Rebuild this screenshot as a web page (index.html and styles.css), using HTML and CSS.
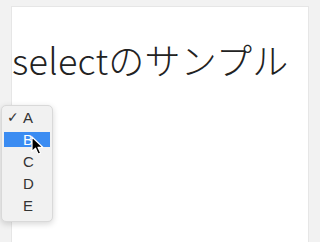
FILE: index.html
```html
<!DOCTYPE html>
<html lang="ja">
<head>
<meta charset="utf-8">
<link rel="stylesheet" href="styles.css">
</head>
<body>
<div class="page">
  <h1 class="title">selectのサンプル</h1>
</div>
<div class="menu">
  <div class="item"><span class="check">✓</span><span class="label">A</span></div>
  <div class="item active"><span class="label">B</span></div>
  <div class="item"><span class="label">C</span></div>
  <div class="item"><span class="label">D</span></div>
  <div class="item"><span class="label">E</span></div>
</div>
<svg class="cursor" width="14" height="20" viewBox="0 0 14 20">
  <path d="M1 1 L1 15.5 L4.5 12.2 L7.2 18.2 L9.6 17.1 L7 11.3 L11.8 11.3 Z" fill="#000" stroke="#fff" stroke-width="1.2" stroke-linejoin="round"/>
</svg>
</body>
</html>
```
FILE: styles.css
```css
html, body {
  margin: 0;
  padding: 0;
  background: #f2f2f2;
  width: 315px;
  height: 242px;
  overflow: hidden;
}
.page {
  margin: 6px 0 0 11px;
  width: 298px;
  height: 240px;
  background: #fff;
  border-top: 1px solid #e6e6e6;
  border-left: 1px solid #e6e6e6;
  border-right: 1px solid #e6e6e6;
  box-sizing: border-box;
}
.title {
  margin: 0;
  padding: 26px 0 0 0;
  font-family: "Noto Sans CJK JP", sans-serif;
  font-weight: 300;
  font-size: 36px;
  line-height: 52px;
  letter-spacing: 0.25px;
  color: #222;
  white-space: nowrap;
}
.menu {
  position: absolute;
  left: 1px;
  top: 105px;
  width: 52px;
  height: 117px;
  box-sizing: border-box;
  padding: 4px 2px 10px;
  background: #f1f1f1;
  border: 1px solid #d9d9d9;
  border-radius: 5px;
  box-shadow: 0 2px 6px rgba(0,0,0,0.16);
  display: flex;
  flex-direction: column;
  gap: 7px;
  font-family: "Liberation Sans", sans-serif;
  font-size: 15px;
  color: #333;
}
.item {
  position: relative;
  height: 15px;
  line-height: 15px;
  padding-left: 19px;
}
.item.active {
  background: #3b8cf2;
  color: #fff;
}
.check {
  position: absolute;
  left: 3px;
  top: 0;
  font-size: 14px;
  font-family: "DejaVu Sans", sans-serif;
  font-weight: bold;
  color: #333;
}
.cursor {
  position: absolute;
  left: 31px;
  top: 136px;
}
```
